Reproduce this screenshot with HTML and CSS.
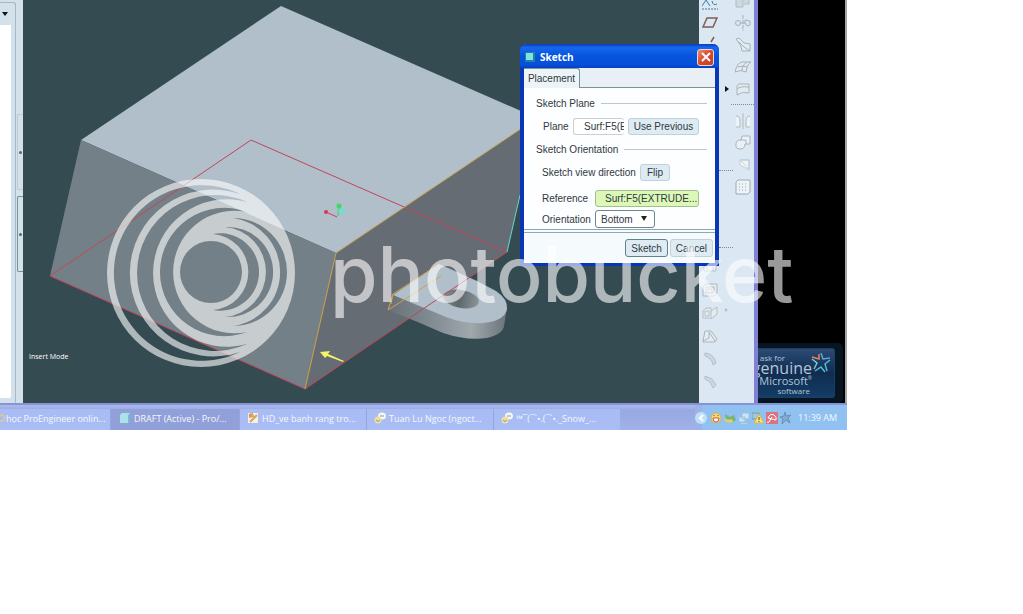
FILE: index.html
```html
<!DOCTYPE html>
<html lang="en">
<head>
<meta charset="utf-8">
<title>DRAFT (Active) - Pro/ENGINEER</title>
<link rel="stylesheet" href="styles.css">
</head>
<body>
<main class="desktop">
  <div class="workspace">
    <aside class="navigator">
      <div class="tree">
        <button class="tree-menu" aria-label="Navigator menu"><svg width="6" height="4" viewBox="0 0 6 4"><path d="M0 0h6L3 4z" fill="#111"/></svg></button>
        <div class="tree-page"></div>
      </div>
      <div class="sashes">
        <button class="sash sash-soft" aria-label="Collapse navigator"></button>
        <button class="sash" aria-label="Collapse browser"></button>
      </div>
    </aside>

    <svg class="viewport" viewBox="23 0 676 403" role="img" aria-label="Model view">
      <path d="M281 6L537 118L336 253L81 140z" fill="#b0bfca"/>
      <path d="M81 140L336 253L305 389L50 276z" fill="#748087"/>
      <path d="M336 253L537 118L507 252L305 389z" fill="#666c73"/>
      <defs>
        <linearGradient id="side" x1="0" x2="1"><stop offset="0" stop-color="#687177"/><stop offset=".4" stop-color="#838e95"/><stop offset=".7" stop-color="#a0a8ac"/><stop offset="1" stop-color="#697379"/></linearGradient>
        <linearGradient id="bore" x1="0" x2="1"><stop offset="0" stop-color="#858e93"/><stop offset=".45" stop-color="#5e676c"/><stop offset="1" stop-color="#8a9499"/></linearGradient>
      </defs>
      <path d="M393 296L388 310L420 323L443 333Q467 341 487 338Q503 334 504 326L507 308z" fill="url(#side)"/>
      <path d="M393 295L439 264L477 281L496 291Q508 299 507 309Q505 319 490 322Q470 326 446 317z" fill="#b0bfca"/>
      <ellipse cx="461" cy="299" rx="18" ry="9" transform="rotate(10 461 299)" fill="url(#bore)"/>
      <path d="M50 276L251 140L507 252" fill="none" stroke="#c34559"/>
      <path d="M50 276L305 389L507 252" fill="none" stroke="#c34559"/>
      <path d="M305 389L336 253L537 118" fill="none" stroke="#d0a24b"/>
      <path d="M439 264L393 294L388 310L441 276M393 294L391 304" fill="none" stroke="#d0a24b"/>
      <path d="M520 195L507 252" stroke="#67d8d5"/>
      <path d="M320 352L330 351L328 354L344 361L343 362L327 356L325 358z" fill="#f4f467"/>
      <path d="M326 212L337 217" stroke="#cf3f56"/><circle cx="326" cy="212" r="2" fill="#d93650"/>
      <path d="M339 206L338 216" stroke="#63cf91" stroke-width="2"/><circle cx="339" cy="206" r="2.5" fill="#45d765"/><circle cx="342" cy="211" r="3" fill="#77dcc9"/>
      <text class="mode" x="29" y="359">Insert Mode</text>
    </svg>

    <div class="tools">
      <div class="tool-column">
        <button class="tool short" aria-label="Sketch tool"><svg viewBox="0 0 16 16" fill="none" stroke="#367f9e"><path d="M0 11l4-6 4 6M10 6q1 5 5 3"/><path d="M0 14h16" stroke-dasharray="2 1"/></svg></button>
        <button class="tool short" aria-label="Datum plane"><svg viewBox="0 0 16 16" fill="none" stroke="#805e50" stroke-width="1.5"><path d="M5 3h10l-4 9H1z"/></svg></button>
        <button class="tool short" aria-label="Datum axis"><svg viewBox="0 0 16 16" fill="none" stroke="#7c6247" stroke-width="1.5"><path d="M12 2l-3 5M7 10l-3 5"/></svg></button>
        <hr class="dots upper">
        <hr class="dots lower">
        <button class="tool" aria-label="Hole"><svg viewBox="0 0 16 16" fill="#e7eef2" stroke="#b3bec7"><path d="M2 6h12v6H2zM5 6v6m6-6v6"/></svg></button>
        <button class="tool" aria-label="Shell"><svg viewBox="0 0 16 16" fill="#e7eef2" stroke="#a2adb5"><path d="M1 5l3-3h11v9l-3 3H1zM4 5h8v6H4zM6 7h4v4H6z"/></svg></button>
        <button class="tool" aria-label="Rib"><svg viewBox="0 0 16 16" fill="#e7eef2" stroke="#aab4bc"><path d="M1 6l3-3h5v10H1zM9 6l6-4v7l-6 5M3 6h4v5H3z"/></svg></button>
        <button class="tool" aria-label="Draft"><svg viewBox="0 0 16 16" fill="#e7eef2" stroke="#9da9b1"><path d="M1 13L3 3h6l6 8-2 3H1zM1 13l6-3V4l6 9"/></svg></button>
        <button class="tool" aria-label="Round"><svg viewBox="0 0 16 16" fill="#cbd5dd" stroke="#a9b5bf"><path d="M3 2q9 1 11 10l-3 2Q10 7 3 5z"/></svg></button>
        <button class="tool" aria-label="Chamfer"><svg viewBox="0 0 16 16" fill="#cbd5dd" stroke="#a9b5bf"><path d="M3 2l7 3 4 6-3 3-3-6-5-3z"/></svg></button>
      </div>
      <div class="arrows">
        <svg width="4" height="6" viewBox="0 0 4 6"><path d="M0 0l4 3-4 3z" fill="#111"/></svg>
        <svg width="4" height="4" viewBox="0 0 4 4"><path d="M0 0l3 2-3 2z" fill="#b2bdc8"/></svg>
      </div>
      <div class="tool-column right">
        <button class="tool" aria-label="Extrude"><svg viewBox="0 0 16 16" fill="#ccd5da" stroke="#a7b1b9"><path d="M1 1h7v13H1zM9 4h5v7H9"/></svg></button>
        <button class="tool" aria-label="Revolve"><svg viewBox="0 0 16 16" fill="#dce5eb" stroke="#98a4ae"><path d="M8 0v16" stroke-dasharray="4 1"/><circle cx="3" cy="8" r="2.5"/><path d="M10 5l5 1v4l-3 1-2-3zM5 8h5"/></svg></button>
        <button class="tool" aria-label="Variable section sweep"><svg viewBox="0 0 16 16" fill="#e6edf1" stroke="#98a4ae"><path d="M1 2l3-1 5 5 6 1v7H7l-1-5zM4 5l5 5 6 4"/></svg></button>
        <button class="tool" aria-label="Boundary blend"><svg viewBox="0 0 16 16" fill="#e6edf1" stroke="#98a4ae"><path d="M0 13Q2 4 7 3h9q-4 2-5 10-5-3-11 0zM3 8q5-2 9 0M7 12q0-6 5-9"/></svg></button>
        <button class="tool" aria-label="Style"><svg viewBox="0 0 16 16" fill="#e6edf1" stroke="#9ba7b0"><path d="M2 14V5q1-3 5-2h7v9q-7-2-12 2zM2 8q3-3 12-2"/></svg></button>
        <hr class="dots wide">
        <button class="tool" aria-label="Mirror"><svg viewBox="0 0 16 16" fill="#f3f7f9" stroke="#a4b0b8"><path d="M8 0v16M1 3q4 0 4 5v6H1M15 3q-4 0-4 5v6h4"/></svg></button>
        <button class="tool" aria-label="Merge"><svg viewBox="0 0 16 16" fill="#eef3f6" stroke="#9ba7b0"><path d="M7 1h8v8h-5q0 5-5 5T1 9q0-4 5-4z"/><path d="M6 5h5v4"/></svg></button>
        <button class="tool" aria-label="Trim"><svg viewBox="0 0 16 16" fill="#f3f7f9" stroke="#a4b0b8"><path d="M5 3h9v10z"/><path d="M5 3v5l9 5" stroke="#c4ced6"/></svg></button>
        <button class="tool" aria-label="Pattern"><svg viewBox="0 0 16 16" fill="#f3f7f9" stroke="#8e9ba5"><path d="M1 3l2-2h12v12l-2 2H1z"/><path d="M4 5h8M4 8h8M4 11h8" stroke-dasharray="1 2"/></svg></button>
      </div>
    </div>

    <div class="wallpaper">
      <div class="genuine">
        <div class="genuine-card">
          <span class="small">ask for</span>
          <span class="large">genuine</span>
          <span class="medium">Microsoft<sup>®</sup></span>
          <span class="small low">software</span>
          <svg class="star" viewBox="0 0 20 20" fill="none" stroke-width="1.5"><path d="M1 4l7 2V1" stroke="#e98155"/><path d="M10 0l2 6 7-1" stroke="#5ca6d5"/><path d="M19 7l-5 4 2 7" stroke="#4fbad2"/><path d="M14 19l-4-5-6 4" stroke="#4fbad2"/><path d="M3 16l3-6-5-4" stroke="#72c9d4"/></svg>
        </div>
      </div>
    </div>
  </div>

  <footer class="taskbar">
    <nav class="tasks">
      <button class="task leading"><svg viewBox="0 0 8 12"><circle cx="2" cy="6" r="4" fill="none" stroke="#e9c490" stroke-width="2"/></svg>học ProEngineer onlin...</button>
      <button class="task active"><svg viewBox="0 0 12 12"><path d="M1 3l2-2h8v8l-2 2H1z" fill="#a9e2eb"/><path d="M9 3v8l2-2V1z" fill="#7ab8ce"/></svg>DRAFT (Active) - Pro/...</button>
      <button class="task"><svg viewBox="0 0 12 12"><path d="M1 1h10v10H1z" fill="#f2f1e6"/><path d="M2 3l3-1 1 2-4 1M3 10l7-7" stroke="#d6a45e" stroke-width="2"/></svg>HD_ve banh rang tro...</button>
      <button class="task"><svg viewBox="0 0 12 12"><ellipse cx="8" cy="4" rx="4" ry="3.5" fill="#f4f8ee"/><circle cx="4" cy="8" r="3.5" fill="#f0dda0"/><path d="M6 4h4M2 8q2 3 4 0" stroke="#8999ac" fill="none"/></svg>Tuan Lu Ngoc (ngoct...</button>
      <button class="task"><svg viewBox="0 0 12 12"><ellipse cx="8" cy="4" rx="4" ry="3.5" fill="#f4f8ee"/><circle cx="4" cy="8" r="3.5" fill="#f0dda0"/><path d="M6 4h4M2 8q2 3 4 0" stroke="#8999ac" fill="none"/></svg>™¯(¯`•.(¯`•._Snow_...</button>
    </nav>
    <div class="tray">
      <button class="expand" aria-label="Show hidden icons"><svg viewBox="0 0 12 12"><circle cx="6" cy="6" r="6" fill="#bfe0fb"/><path d="M8 3L5 6l3 3" fill="none" stroke="#fff" stroke-width="2"/></svg></button>
      <svg viewBox="0 0 12 12"><circle cx="6" cy="6" r="5" fill="#f4d874" stroke="#d9ae5e"/><path d="M3 6h6q0 4-3 4T3 6" fill="#fff" stroke="#c45d4b"/><path d="M4 3v1m4-1v1" stroke="#755c38"/></svg>
      <svg viewBox="0 0 12 12"><path d="M1 2l5 3 4-2 2 5-5 3-5-3z" fill="#73b778"/><path d="M0 6q4 3 8 1l1 3-3 1-5-2z" fill="#e3cf69"/></svg>
      <svg viewBox="0 0 12 12"><path d="M4 1h7v6H4zM1 5h6v5H1z" fill="#cbe5f6" stroke="#9dbfdd"/><path d="M3 12h6" stroke="#dceaf7"/></svg>
      <svg viewBox="0 0 12 12"><path d="M0 1h7v6H0z" fill="#a4c4d8" stroke="#799ab8"/><path d="M7 2l5 9H2z" fill="#f4e576" stroke="#d5b84d"/><path d="M7 5v3m0 1v1" stroke="#544c34"/></svg>
      <svg viewBox="0 0 12 12"><path d="M0 0h12v12H0z" fill="#dc7280"/><path d="M2 6q2-5 6-3 3 2 2 5zM6 5l-3 5q-1 1-2 0" fill="none" stroke="#fff"/></svg>
      <svg viewBox="0 0 12 12"><path d="M5 0l1 4 5-1-3 3 2 5-4-3-4 4 1-5-3-2 4-1z" fill="#82aecb" stroke="#688fb4"/></svg>
      <time>11:39 AM</time>
    </div>
  </footer>

  <section class="dialog" role="dialog" aria-labelledby="dialog-title">
    <header class="titlebar">
      <svg width="10" height="10" viewBox="0 0 10 10"><path d="M0 0h10v10H0z" fill="#257f9e"/><path d="M1 1h7v7H1z" fill="#7ce2e4"/></svg>
      <h1 id="dialog-title">Sketch</h1>
      <button class="close" aria-label="Close"><svg width="10" height="10" viewBox="0 0 10 10"><path d="M1 1l8 8M9 1L1 9" stroke="#fff" stroke-width="2"/></svg></button>
    </header>
    <div class="tabs"><button class="tab">Placement</button></div>
    <form class="placement">
      <h2>Sketch Plane</h2>
      <div class="row">
        <label for="plane">Plane</label>
        <input id="plane" class="plane" value="Surf:F5(E">
        <button type="button" class="button grow">Use Previous</button>
      </div>
      <h2>Sketch Orientation</h2>
      <div class="row flip"><span>Sketch view direction</span><button type="button" class="button">Flip</button></div>
      <div class="row reference"><label for="reference">Reference</label><input id="reference" class="collector" value="Surf:F5(EXTRUDE..."></div>
      <div class="row orientation"><label for="orientation">Orientation</label>
        <span class="select"><select id="orientation"><option>Bottom</option><option>Top</option><option>Left</option><option>Right</option></select><svg width="6" height="5" viewBox="0 0 6 5"><path d="M0 0h6L3 5z" fill="#222"/></svg></span>
      </div>
    </form>
    <div class="actions"><button class="button default">Sketch</button><button class="button">Cancel</button></div>
  </section>

  <svg class="watermark" viewBox="0 0 847 430" fill="#fff">
    <path fill-rule="evenodd" d="M107 273a94 94 0 1 1 188 0a94 94 0 1 1-188 0z
      M180 272a31 31 0 1 0 62 0a31 31 0 1 0-62 0z
      M240 194A87.8 87.8 0 1 0 240 352A83.4 83.4 0 1 1 240 194z
      M247 202A77.9 77.9 0 1 0 247 344A73.8 73.8 0 1 1 247 202z
      M247 212A64.2 64.2 0 1 0 247 332A61.3 61.3 0 1 1 247 212z
      M213 234A38.7 38.7 0 1 1 213 310A38.1 38.1 0 0 0 213 234z
      M225 227A45.1 45.1 0 1 1 225 317A45.2 45.2 0 0 0 225 227z
      M233 218A54 54 0 0 1 233 326A54.5 54.5 0 0 0 233 218z"/>
    <text x="330" y="302">photobucket</text>
  </svg>
</main>
</body>
</html>
```

FILE: styles.css
```css
* { box-sizing: border-box; }
body { margin: 0; background: #fff; font-family: "Liberation Sans", Arial, sans-serif; font-size: 10px; color: #303840; }
button, input, select { font: inherit; color: inherit; margin: 0; padding: 0; border: 0; background: none; }
svg { display: block; flex: none; }

.desktop { position: relative; margin-right: 176px; overflow: hidden; }
.workspace { display: grid; grid-template-columns: 23px 1fr 59px 89px; }

.navigator { display: flex; background: #d3e1eb; }
.tree { display: flex; flex-direction: column; width: 16px; margin-top: 2px; padding-bottom: 5px; border: 1px solid #a6b7c5; border-width: 1px 1px 0 0; border-top-right-radius: 3px; }
.tree-menu { display: flex; align-items: center; height: 22px; padding-left: 2px; }
.tree-page { flex: 1; margin-right: 4px; background: #fff; border-bottom-right-radius: 2px; }
.sashes { display: flex; flex-direction: column; gap: 6px; flex: 1; padding: 114px 0 0 1px; }
.sash { display: grid; place-items: center; height: 76px; border: 1px solid #78909f; border-right: 0; border-radius: 2px 0 0 2px; }
.sash::before { content: ""; width: 3px; height: 3px; border-radius: 50%; background: #526575; }
.sash-soft { border-color: #bccbd7; }

.viewport { width: 100%; background: #344b52; }
.mode { font: 7px "Open Sans", sans-serif; fill: #fff; }

.tools { display: grid; grid-template-columns: 22px 10px 1fr; background: #dbe7f2; border-right: 4px solid #8181d3; height: 100%; }
.tool-column { display: flex; flex-direction: column; margin-top: -7px; }
.tool-column.right { margin-top: -10px; }
.tool { display: grid; place-items: center; height: 23px; opacity: .8; }
.right .tool { height: 22px; }
.tool.short { height: 20px; opacity: 1; }
.tool svg { width: 16px; height: 16px; }
.dots { width: 14px; height: 0; margin: 0; border: 0; border-top: 1px dotted #7f8b97; align-self: flex-end; position: relative; left: 12px; }
.upper { margin-top: 117px; }
.lower { margin: 76px 0 7px; }
.wide { width: 100%; margin: 4px 0 5px; left: 0; }
.arrows { display: flex; flex-direction: column; justify-content: flex-start; gap: 216px; padding: 86px 0 0 4px; }

.wallpaper { display: flex; align-items: flex-end; background: #000; border-right: 2px solid #a4a7aa; }
.genuine { flex: 1; min-width: 0; padding: 5px 8px 5px 0; margin-right: 2px; border-radius: 0 5px 5px 0; background: #061521; }
.genuine-card { position: relative; display: flex; flex-direction: column; align-items: flex-end; height: 50px; padding: 5px 22px 0 0; overflow: hidden; border: 1px solid #1c3e62; border-left: 0; border-radius: 0 3px 3px 0; background: linear-gradient(#2b4a75, #102d50 50%, #133c66); color: #b3c5d8; font-family: "Open Sans", sans-serif; }
.small { font-size: 8px; line-height: 8px; margin-right: 27px; }
.small.low { margin-right: 2px; }
.large { font-size: 16px; line-height: 13px; }
.medium { font-size: 11px; line-height: 12px; }
.medium sup { font-size: 5px; line-height: 0; }
.star { position: absolute; top: 4px; right: 3px; width: 20px; height: 20px; }

.taskbar { display: flex; justify-content: space-between; height: 27px; border-top: 2px solid #8793d2; background: linear-gradient(#acbcf0, #98a9e2 20%, #a1b1e9); color: #f4f7ff; font-family: "Open Sans", sans-serif; font-size: 9px; }
.tasks { display: flex; padding-top: 4px; }
.task { display: flex; align-items: center; gap: 3px; width: 127px; padding: 0 0 3px 7px; border-left: 1px solid #95a6dc; background: #a9bdf4; white-space: nowrap; overflow: hidden; }
.task svg { width: 12px; height: 12px; }
.task.leading { width: 110px; padding-left: 0; gap: 0; border-left: 0; }
.task.leading svg { width: 6px; }
.task.active { width: 129px; padding-left: 8px; background: #91a0d8; }
.tray { display: flex; align-items: center; gap: 2px; width: 152px; background: linear-gradient(90deg, #a0b1e8 7px, #91c1f0 7px); }
.tray svg { width: 12px; height: 12px; }
.tray time { margin-left: 4px; white-space: nowrap; }
.expand { margin-right: 1px; }

.dialog { position: absolute; top: 44px; right: 128px; width: 199px; border: 4px solid #0836b4; border-width: 0 4px 3px; border-radius: 6px 6px 0 0; background: #fcfeff; }
.titlebar { display: flex; align-items: center; gap: 5px; height: 24px; margin: 0 -4px; padding: 2px 5px 0 5px; border-radius: 6px 6px 0 0; background: linear-gradient(#0b3dbc, #1667ee 15%, #0753dc 50%, #0650dc 85%, #0740c2); color: #fff; }
.titlebar h1 { flex: 1; margin: 0; font: bold 10px "Open Sans", sans-serif; }
.close { display: grid; place-items: center; width: 17px; height: 17px; border: 1px solid #f0d5d0; border-radius: 3px; background: linear-gradient(135deg, #ed8d70, #d7472a 50%, #c04228); }
.tabs { display: flex; height: 20px; background: #e8f0f5; border-bottom: 1px solid #77929b; }
.tab { width: 56px; height: 20px; border: 1px solid #77929b; border-width: 1px 1px 0 0; border-top-right-radius: 3px; background: #edf4f8; }
.placement { padding: 7px 8px 1px 12px; }
.placement h2 { display: flex; align-items: center; gap: 6px; height: 16px; margin: 0 0 6px; font-size: 10px; font-weight: normal; white-space: nowrap; }
.placement h2::after { content: ""; flex: 1; border-top: 1px solid #bdc6cb; }
.row { display: flex; align-items: center; gap: 4px; height: 18px; margin-bottom: 6px; padding: 0 8px 0 7px; white-space: nowrap; }
.row.flip { margin-bottom: 8px; padding-left: 6px; gap: 4px; }
.row.reference { margin-bottom: 3px; padding-left: 6px; }
.row.orientation { margin-bottom: 0; padding-left: 6px; }
.row label { min-width: 26px; }
.reference label, .orientation label { width: 49px; }
.plane { width: 51px; height: 17px; padding-left: 10px; border: 1px solid #c6d0d6; border-right: 0; border-radius: 3px; background: #fff; }
.button { height: 17px; padding: 0 6px; border: 1px solid #c1d0da; border-radius: 3px; background: #deebf3; }
.grow { flex: 1; padding: 0; }
.collector { flex: 1; min-width: 0; height: 17px; padding-left: 9px; border: 1px solid #a8bc91; border-radius: 3px; background: #dcf8b7; }
.select { position: relative; }
.select select { display: block; appearance: none; width: 60px; height: 18px; padding-left: 5px; border: 1px solid #6d8592; border-radius: 3px; background: #fff; }
.select svg { position: absolute; right: 8px; top: 6px; pointer-events: none; }
.actions { display: flex; justify-content: flex-end; gap: 2px; padding: 6px 2px; border-top: 4px double #8ea7b0; background: #f5fafd; }
.actions .button { height: 18px; padding: 0 5px; }
.actions .default { border-color: #65808d; }

.watermark { position: absolute; top: 0; left: 0; width: 100%; opacity: .6; pointer-events: none; }
.watermark text { font: 500 77px Inter, sans-serif; }
```
